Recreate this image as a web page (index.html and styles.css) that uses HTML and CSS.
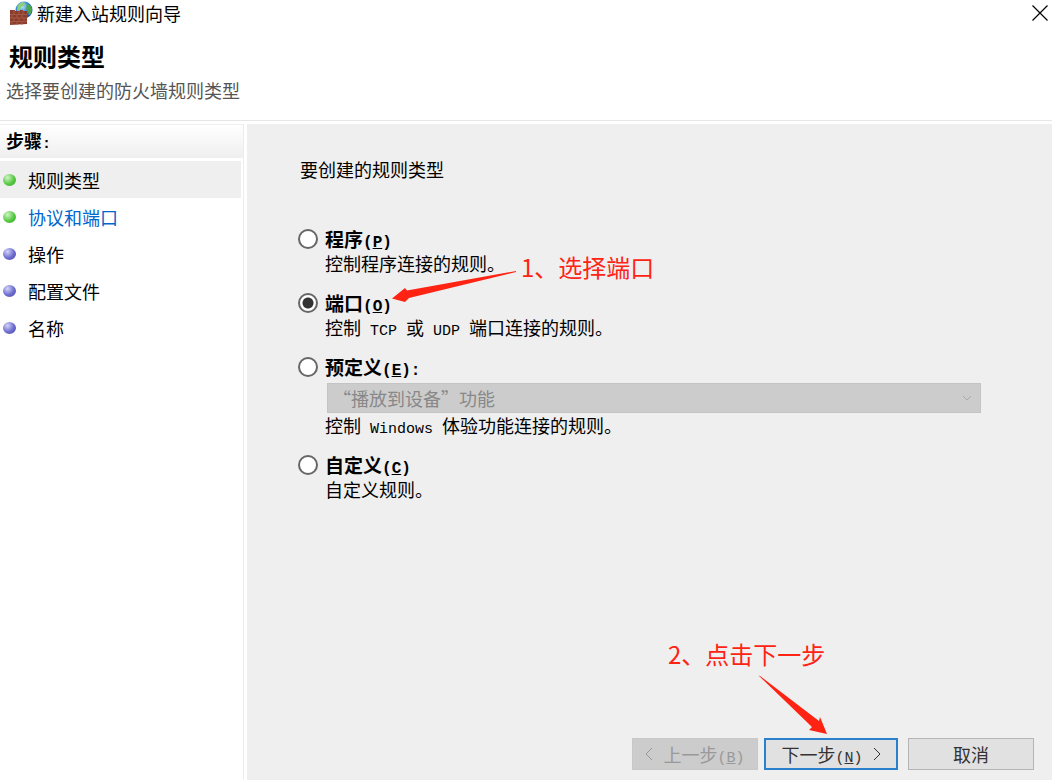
FILE: index.html
```html
<!DOCTYPE html>
<html lang="zh-CN">
<head>
<meta charset="utf-8">
<title>新建入站规则向导</title>
<link rel="stylesheet" href="styles.css">
</head>
<body>
<div class="titlebar">
	<svg class="app-icon" width="24" height="24" viewBox="0 0 24 24" aria-hidden="true">
		<defs>
			<radialGradient id="globe" cx="0.4" cy="0.3" r="0.7">
				<stop offset="0" stop-color="#b9e4fa"/>
				<stop offset="0.5" stop-color="#3c8ed8"/>
				<stop offset="1" stop-color="#1a4fa5"/>
			</radialGradient>
		</defs>
		<circle cx="15" cy="9" r="8.5" fill="url(#globe)"/>
		<path d="M9 4l4-3 3 1-1 3-3 1-1 3-3 1z" fill="#8ccf7c"/>
		<path d="M18 3l3 1 2 4-1 5-2 1-1-4-2-2z" fill="#4da54c"/>
		<path d="M1 9h5v1h5v-1h3v1h4v13l-17 1z" fill="#8b3c2c"/>
		<path d="M1 13.500h17M1 17h17M1 20.500h17M5 9v4M10 10v3M14 10v3M3 14v3M8 14v3M13 14v3M5 17v3M10 17v3M15 17v3M3 21v3M8 21v3M13 21v3" stroke="#a95f4b" stroke-width="0.8" fill="none"/>
	</svg>
	<span class="caption">新建入站规则向导</span>
	<button class="close" aria-label="关闭">
		<svg width="16" height="16" viewBox="0 0 16 16"><path d="M0.500 0.500l15 15M15.500 0.500l-15 15" stroke="#000" stroke-width="1.200"/></svg>
	</button>
</div>
<div class="header">
	<h1>规则类型</h1>
	<p>选择要创建的防火墙规则类型</p>
</div>
<div class="wizard">
	<div class="sidebar">
		<h2>步骤<span class="latin">:</span></h2>
		<ul class="steps">
			<li class="current"><span class="dot green"></span>规则类型</li>
			<li><span class="dot green"></span><a href="#">协议和端口</a></li>
			<li><span class="dot"></span>操作</li>
			<li><span class="dot"></span>配置文件</li>
			<li><span class="dot"></span>名称</li>
		</ul>
	</div>
	<form class="page">
		<p class="question">要创建的规则类型</p>
		<div class="option">
			<input type="radio" name="type" id="program">
			<label for="program">程序<span class="latin">(<u>P</u>)</span></label>
			<p>控制程序连接的规则。</p>
		</div>
		<div class="option">
			<input type="radio" name="type" id="port" checked>
			<label for="port">端口<span class="latin">(<u>O</u>)</span></label>
			<p>控制<span class="latin"> TCP </span>或<span class="latin"> UDP </span>端口连接的规则。</p>
			<div class="note note-port">
				<svg width="126" height="34" viewBox="0 0 126 34"><path d="M1 28.500L14 18l2 2.500L125 1v1L18 28l-4 4z" fill="#ff2313"/></svg>
				<span>1、选择端口</span>
			</div>
		</div>
		<div class="option">
			<input type="radio" name="type" id="predefined">
			<label for="predefined">预定义<span class="latin">(<u>E</u>):</span></label>
			<div class="combo">
				<select disabled aria-label="预定义规则"><option>“播放到设备”功能</option></select>
				<svg width="10" height="6" viewBox="0 0 10 6"><path d="M1 1l4 4 4-4" fill="none" stroke="#aaa"/></svg>
			</div>
			<p>控制<span class="latin"> Windows </span>体验功能连接的规则。</p>
		</div>
		<div class="option">
			<input type="radio" name="type" id="custom">
			<label for="custom">自定义<span class="latin">(<u>C</u>)</span></label>
			<p>自定义规则。</p>
		</div>
		<div class="buttons">
			<button type="button" disabled><svg width="8" height="14" viewBox="0 0 8 14"><path d="M7 1L1 7l6 6"/></svg><span>上一步<span class="latin">(<u>B</u>)</span></span></button>
			<button type="button" class="next"><span>下一步<span class="latin">(<u>N</u>)</span></span><svg width="8" height="14" viewBox="0 0 8 14"><path d="M1 1l6 6-6 6"/></svg></button>
			<button type="button">取消</button>
			<div class="note note-next">
				<span>2、点击下一步</span>
				<svg width="70" height="60" viewBox="0 0 70 60"><path d="M0.500 0.500L2 1l59 45 1-4 7 17-18-4 3-3z" fill="#ff2313"/></svg>
			</div>
		</div>
	</form>
</div>
</body>
</html>
```

FILE: styles.css
```css
* {
	box-sizing: border-box;
}
body {
	margin: 0;
	min-height: 100vh;
	display: flex;
	flex-direction: column;
	background: #fff;
	color: #000;
	font-family: "Noto Sans CJK SC", sans-serif;
	font-size: 18px;
	line-height: 24px;
}
h1, h2, p, ul {
	margin: 0;
	padding: 0;
}
svg {
	display: block;
	flex: none;
}
/* half-width characters, 9px each */
.latin {
	font-family: "Liberation Mono", monospace;
	font-size: 15px;
	line-height: 1;
	white-space: pre;
}
.titlebar {
	display: flex;
	align-items: center;
	height: 27px;
	padding: 0 4px 2px 9px;
}
.caption {
	flex: 1;
	margin-left: 4px;
}
.close {
	padding: 0;
	border: 0;
	background: none;
}
.header {
	height: 94px;
	padding: 13px 6px 0;
	border-bottom: 1px solid #e6e6e6;
}
.header h1 {
	padding-left: 3px;
	font-size: 24px;
	line-height: 32px;
}
.header p {
	margin-top: 6px;
	color: #555;
}
.wizard {
	flex: 1;
	display: flex;
	padding-top: 3px;
}
.sidebar {
	width: 244px;
	margin-right: 3px;
	border-right: 1px solid #ececec;
}
.sidebar h2 {
	height: 34px;
	padding-left: 6px;
	border-top: 1px solid #f0f0f0;
	background: linear-gradient(#fff, #efefef);
	font-size: 18px;
	line-height: 31px;
}
.steps {
	margin: 3px 2px 0 0;
	list-style: none;
}
.steps li {
	display: flex;
	align-items: center;
	gap: 12px;
	height: 37px;
	padding-left: 3px;
}
.steps .current {
	background: #efefef;
}
.steps a {
	color: #0066cc;
	text-decoration: none;
}
.dot {
	width: 13px;
	height: 12px;
	border-radius: 50%;
	background: radial-gradient(circle at 35% 30%, #d4d4f8, #6a6acd 55%, #5050b0);
}
.dot.green {
	background: radial-gradient(circle at 35% 30%, #d0f5c8, #55c840 55%, #3aa62c);
}
.page {
	flex: 1;
	display: flex;
	flex-direction: column;
	padding: 33px 18px 10px 51px;
	background: #efefef;
}
.question {
	margin: 0 0 46px 2px;
}
.option {
	position: relative;
	display: grid;
	grid-template-columns: 20px 1fr;
	column-gap: 7px;
	margin: 0 53px 15px 0;
}
.option label {
	height: 24px;
	font-size: 19px;
	font-weight: bold;
}
.option label .latin {
	font-size: 16px;
}
.option p {
	grid-column: 2;
	height: 25px;
	line-height: 24px;
}
input[type=radio] {
	appearance: none;
	width: 20px;
	height: 20px;
	margin: 2px 0 0;
	border: 2px solid #666;
	border-radius: 50%;
	background: #fff;
}
input[type=radio]:checked {
	background: radial-gradient(circle, #333 5px, #fff 6px);
}
.combo {
	grid-column: 2;
	display: grid;
	align-items: center;
	margin: 4px 0 0 2px;
}
.combo select, .combo svg {
	grid-area: 1 / 1;
}
.combo svg {
	justify-self: end;
	margin-right: 9px;
}
select {
	appearance: none;
	width: 100%;
	height: 30px;
	padding: 0 5px;
	border: 1px solid #c4c4c4;
	border-radius: 0;
	background: #ccc;
	color: #888;
	opacity: 1;
	font: inherit;
}
.buttons {
	position: relative;
	display: flex;
	justify-content: flex-end;
	margin-top: auto;
}
.buttons button {
	display: flex;
	align-items: center;
	justify-content: center;
	gap: 10px;
	width: 126px;
	height: 32px;
	padding: 0;
	border: 1px solid #b5b5b5;
	background: #e1e1e1;
	color: #333;
	font: inherit;
}
.buttons button path {
	fill: none;
	stroke: currentColor;
}
.buttons button:disabled {
	border-color: #c8c8c8;
	background: #ccc;
	color: #999;
}
.buttons .next {
	width: 134px;
	margin: 0 10px 0 6px;
	border: 2px solid #2a80cc;
}
.note {
	position: absolute;
	color: #ff2313;
	font-size: 24px;
	line-height: 32px;
	white-space: nowrap;
}
.note-port {
	left: 93px;
	top: -40px;
	display: flex;
	gap: 4px;
}
.note-port svg {
	margin-top: 19px;
}
.note-next {
	right: 206px;
	bottom: 35px;
}
.note-next svg {
	margin: 5px 0 0 90px;
}
```
